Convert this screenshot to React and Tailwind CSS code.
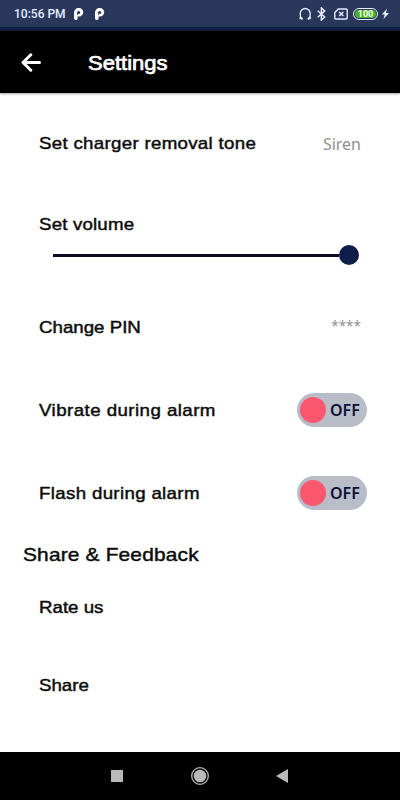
import React, { useState } from 'react';

const LABEL = "block w-fit origin-left scale-x-110 font-['Liberation_Sans',sans-serif] text-[17px] leading-[20px] whitespace-nowrap text-[#0c0c0c] [-webkit-text-stroke:0.45px_#0c0c0c]";
const VALUE = "font-['Noto_Sans',sans-serif] leading-[20px] text-[#8f8f8f]";

// --- STATUS BAR ---
const ParkIcon = () => (
  <svg width="11" height="14" viewBox="0 0 11 14">
    <path d="M1 6.300C1 3 3 1 5.700 1 8.400 1 10.200 2.900 10.200 5.300S8.300 9.600 5.900 9.600H4.600V11.400Q4.600 13 2.800 13T1 11.600Z" fill="#fff" />
    <circle cx="5.700" cy="5.400" r="1.500" fill="#29375b" />
    <path d="M4.200 5.400h1.200L4.600 8.300H4.200z" fill="#29375b" />
  </svg>
);

const StatusBar = () => (
  <div className="h-[27px] bg-[#29375b] flex items-center pl-[14px] pr-[10px] text-[#e6ecff]">
    <span className="font-['Roboto',sans-serif] font-medium text-[12px] leading-[14px] w-[59px] whitespace-nowrap">10:56 PM</span>
    <div className="flex gap-[10px]">
      <ParkIcon />
      <ParkIcon />
    </div>
    <div className="ml-auto flex items-center">
      <svg width="15" height="14" viewBox="0 0 15 14" fill="none" stroke="currentColor">
        <path d="M3.200 11.500C2.300 10.200 2.200 8.500 2.200 6.500a5 5 0 0 1 10 0c0 2-.1 3.700-1 5" strokeWidth="1.300" />
        <path d="M1.600 10.500l3 1.500M12.800 10.500l-3 1.500" strokeWidth="2" />
      </svg>
      <svg className="ml-[4px]" width="9" height="14" viewBox="0 0 9 14" fill="none" stroke="currentColor" strokeWidth="1.500">
        <path d="M.7 3.700l7 6.300-3.300 3V1l3.300 3-7 6.300" />
      </svg>
      <svg className="ml-[8px]" width="14" height="12" viewBox="0 0 14 12" fill="none" stroke="currentColor" strokeWidth="1.400">
        <path d="M4.300 1h7.900q1 0 1 1v8q0 1-1 1H1.800q-1 0-1-1V4.500z" />
        <path d="M5.200 3.900l4.200 4.200M9.400 3.900L5.200 8.100" />
      </svg>
      <div className="ml-[5px] w-[25px] h-[12px] rounded-full border border-[#e6ecff] p-px flex">
        <div className="flex-1 rounded-full bg-[#45b51f] flex items-center justify-center font-['Roboto',sans-serif] font-bold text-[9px] leading-[8px] text-white"><span className="pt-px">100</span></div>
      </div>
      <svg className="ml-[3px]" width="9" height="12" viewBox="0 0 9 12" fill="currentColor">
        <path d="M6 .7L.8 6.600h2.900L2.400 11.300 8.100 5H5z" />
      </svg>
    </div>
  </div>
);

// --- HEADER ---
const Header = () => (
  <header className="h-[62px] bg-black flex items-center pl-[21px] shadow-[0_1px_2px_rgba(0,0,0,0.35)]">
    <svg width="20" height="20" viewBox="0 0 20 20" fill="none" stroke="#fff" strokeWidth="3" strokeLinecap="round" strokeLinejoin="round">
      <path d="M18.500 10.500H2.200M9.800 2.800L2 10.500l7.800 7.700" />
    </svg>
    <h1 className="ml-[47px] pt-px origin-left scale-x-110 font-['Liberation_Sans',sans-serif] text-[20px] leading-[24px] text-white [-webkit-text-stroke:0.7px_#fff]">Settings</h1>
  </header>
);

// --- TOGGLE ---
const Toggle = ({ on, onChange }) => (
  <button onClick={() => onChange(!on)} className="w-[70px] h-[34px] rounded-full bg-[#b8bdc8] flex items-center pl-[3px]">
    <span className="w-[26px] h-[26px] rounded-full bg-[#fb586f]"></span>
    <span className="ml-[4px] -mt-px font-['Noto_Sans',sans-serif] font-semibold text-[16px] leading-[20px] text-[#0b1038]">{on ? 'ON' : 'OFF'}</span>
  </button>
);

// --- NAVIGATION BAR ---
const NavBar = () => (
  <nav className="h-[48px] bg-black flex items-center pl-[111px]">
    <div className="w-[12px] h-[12px] bg-[#b9b9b9]"></div>
    <svg className="ml-[68px]" width="18" height="18" viewBox="0 0 18 18">
      <circle cx="9" cy="9" r="8.300" fill="none" stroke="#b9b9b9" strokeWidth="1.300" />
      <circle cx="9" cy="9" r="6.300" fill="#b9b9b9" />
    </svg>
    <svg className="ml-[67px]" width="12" height="14" viewBox="0 0 12 14" fill="#b9b9b9">
      <path d="M12 0v14L0 7z" />
    </svg>
  </nav>
);

export default function App() {
  const [vibrate, setVibrate] = useState(false);
  const [flash, setFlash] = useState(false);

  return (
    <div className="w-[400px] h-[800px] bg-white flex flex-col overflow-hidden">
      <StatusBar />
      <div className="h-[4px] bg-[#0f1d45]"></div>
      <Header />
      <main className="flex-1 flex flex-col pl-[39px]">
        <div className="mt-[41px] h-[20px] pr-[39px] flex items-center justify-between">
          <span className={`${LABEL} tracking-[0.27px]`}>Set charger removal tone</span>
          <span className={`${VALUE} text-[16px]`}>Siren</span>
        </div>
        <div className={`${LABEL} mt-[61px] tracking-[0.15px]`}>Set volume</div>
        <div className="mt-[10px] h-[21px] pl-[14px] flex items-center">
          <div className="w-[286px] h-[3px] bg-[#090b24]"></div>
          <div className="w-[20px] h-[20px] -mt-px rounded-full bg-[#101d48]"></div>
        </div>
        <div className="mt-[52px] h-[20px] pr-[39px] flex items-center justify-between">
          <span className={LABEL}>Change PIN</span>
          <span className={`${VALUE} text-[13.5px] -mt-[5px]`}>****</span>
        </div>
        <div className="mt-[55px] h-[34px] pr-[33px] flex items-center justify-between">
          <span className={`${LABEL} tracking-[0.4px] pt-px`}>Vibrate during alarm</span>
          <Toggle on={vibrate} onChange={setVibrate} />
        </div>
        <div className="mt-[49px] h-[34px] pr-[33px] flex items-center justify-between">
          <span className={`${LABEL} tracking-[0.3px] pt-px`}>Flash during alarm</span>
          <Toggle on={flash} onChange={setFlash} />
        </div>
        <h2 className="-ml-[16px] mt-[33px] origin-left scale-x-110 w-fit font-['Liberation_Sans',sans-serif] text-[19px] leading-[24px] tracking-[0.15px] text-[#0c0c0c] [-webkit-text-stroke:0.45px_#0c0c0c]">Share &amp; Feedback</h2>
        <div className={`${LABEL} mt-[31px]`}>Rate us</div>
        <div className={`${LABEL} mt-[58px]`}>Share</div>
      </main>
      <NavBar />
    </div>
  );
}
